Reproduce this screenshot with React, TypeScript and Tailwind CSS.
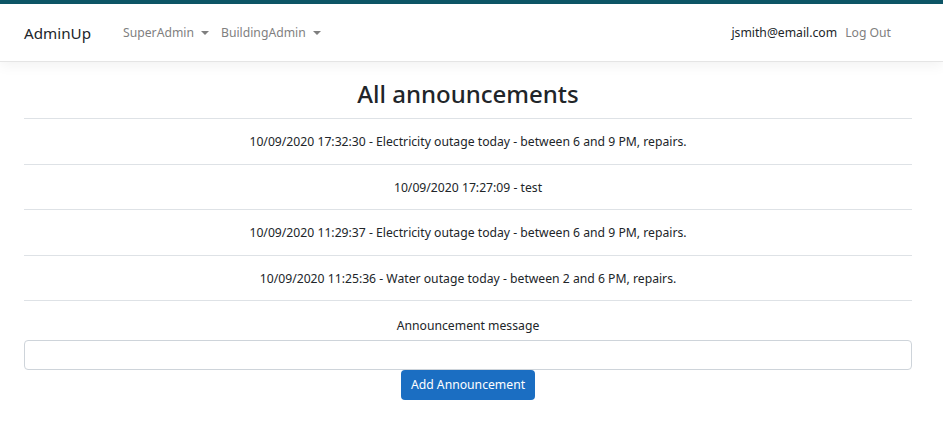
import React from "react";

const items = [
  "10/09/2020 17:32:30 - Electricity outage today - between 6 and 9 PM, repairs.",
  "10/09/2020 17:27:09 - test",
  "10/09/2020 11:29:37 - Electricity outage today - between 6 and 9 PM, repairs.",
  "10/09/2020 11:25:36 - Water outage today - between 2 and 6 PM, repairs.",
];

function Caret() {
  return <span className="ml-[7px] inline-block h-0 w-0 border-x-[4px] border-t-[4px] border-x-transparent border-t-[#7f7f7f] align-middle" />;
}

export default function App() {
  return (
    <div className="min-h-[425px] bg-white text-[#212529]" style={{ fontFamily: '"Noto Sans", "Open Sans", sans-serif' }}>
      <div className="h-[4px] bg-[#0e5667]" />
      <nav className="flex h-[58px] items-center border-b border-[#e5e5e5] bg-white pl-[24px] pr-[52px] pt-[2px] shadow-[0_4px_12px_rgba(0,0,0,0.05)]">
        <span className="text-[15.2px] text-[#212529]">AdminUp</span>
        <div className="ml-[32px] flex items-center gap-[12px] text-[12.2px] text-[#7f7f7f]">
          <span className="flex items-center">SuperAdmin<Caret /></span>
          <span className="flex items-center">BuildingAdmin<Caret /></span>
        </div>
        <div className="ml-auto flex items-center gap-[8px] text-[12.2px]">
          <span className="text-[#212529]">jsmith@email.com</span>
          <span className="text-[#7f7f7f]">Log Out</span>
        </div>
      </nav>
      <main className="ml-[24px] mr-[31px]">
        <h1 className="mt-[16px] text-center text-[24px] font-medium leading-[32px] text-[#212529]">All announcements</h1>
        <div className="mt-[8px]">
          {items.map((t) => (
            <div key={t} className="flex h-[45.5px] items-center justify-center border-t border-[#dee2e6] pt-[2px] text-[12.2px]">
              {t}
            </div>
          ))}
        </div>
        <div className="flex flex-col items-center border-t border-[#dee2e6]">
          <label className="mt-[15px] text-[12.2px] leading-[20px]">Announcement message</label>
          <input className="mt-[4px] h-[30px] w-full rounded-[4px] border border-[#ced4da] px-3 outline-none" />
          <button className="h-[30px] rounded-[4px] bg-[#1b6ec2] px-[10px] pt-[1px] text-[12.2px] text-white">Add Announcement</button>
        </div>
      </main>
    </div>
  );
}
